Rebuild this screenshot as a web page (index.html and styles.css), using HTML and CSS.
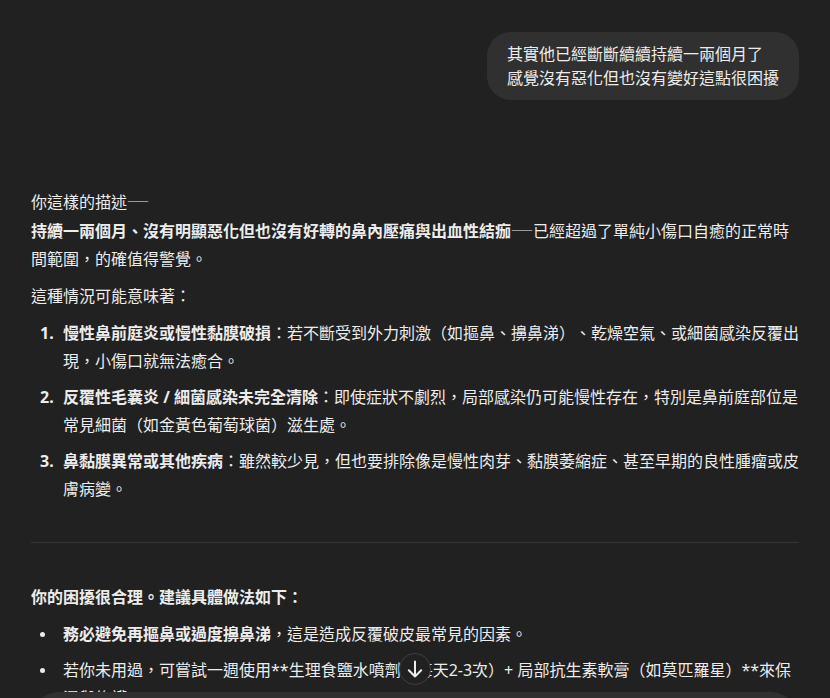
FILE: index.html
```html
<!DOCTYPE html>
<html lang="zh-Hant">
<head>
<meta charset="utf-8">
<title>Chat</title>
<link rel="stylesheet" href="styles.css">
</head>
<body>
<main class="thread">
  <section class="turn user">
    <div class="bubble">其實他已經斷斷續續持續一兩個月了<br>感覺沒有惡化但也沒有變好這點很困擾</div>
  </section>
  <section class="turn assistant">
    <p>你這樣的描述<span class="dash">——</span><br><strong>持續一兩個月、沒有明顯惡化但也沒有好轉的鼻內壓痛與出血性結痂</strong><span class="dash">——</span>已經超過了單純小傷口自癒的正常時間範圍，的確值得警覺。</p>
    <p>這種情況可能意味著：</p>
    <ol>
      <li><strong>慢性鼻前庭炎或慢性黏膜破損</strong>：若不斷受到外力刺激（如摳鼻、擤鼻涕）、乾燥空氣、或細菌感染反覆出現，小傷口就無法癒合。</li>
      <li><strong>反覆性毛囊炎 / 細菌感染未完全清除</strong>：即使症狀不劇烈，局部感染仍可能慢性存在，特別是鼻前庭部位是常見細菌（如金黃色葡萄球菌）滋生處。</li>
      <li><strong>鼻黏膜異常或其他疾病</strong>：雖然較少見，但也要排除像是慢性肉芽、黏膜萎縮症、甚至早期的良性腫瘤或皮膚病變。</li>
    </ol>
    <hr>
    <p><strong>你的困擾很合理。建議具體做法如下：</strong></p>
    <ul>
      <li><strong>務必避免再摳鼻或過度擤鼻涕</strong>，這是造成反覆破皮最常見的因素。</li>
      <li>若你未用過，可嘗試一週使用**生理食鹽水噴劑（每天2-3次）+ 局部抗生素軟膏（如莫匹羅星）**來保濕與修護。</li>
    </ul>
  </section>
</main>
<div class="composer"></div>
<button class="scroll-down" type="button" aria-label="Scroll down">
  <svg width="20" height="20" viewBox="0 0 20 20" fill="none" stroke="#ececec" stroke-width="2" stroke-linecap="round" stroke-linejoin="round"><path d="M10 2.5V17.5M3.8 11.3L10 17.5L16.2 11.3"/></svg>
</button>
</body>
</html>
```

FILE: styles.css
```css
html, body {
  margin: 0;
  height: 100%;
  overflow: hidden;
  background: #212121;
}

body {
  font-family: "Noto Sans", "Noto Sans CJK TC", sans-serif;
  color: #ececec;
  font-size: 16px;
  line-height: 28px;
  text-spacing-trim: space-all;
}

.thread {
  width: 768px;
  margin: 0 auto;
  padding-top: 32px;
}

.user {
  display: flex;
  justify-content: flex-end;
}

.bubble {
  background: #303030;
  border-radius: 24px;
  padding: 10px 20px;
  line-height: 24px;
}

.assistant {
  padding-top: 87px;
}

.assistant p {
  margin: 0 0 9px;
}

strong {
  font-weight: 700;
}

.dash {
  font-family: "Noto Sans CJK TC", sans-serif;
  font-size: 11px;
  font-weight: 700;
  vertical-align: 2px;
}

ol, ul {
  margin: 0 -3px 0 0;
  padding-left: 32px;
  list-style: none;
}

ol {
  counter-reset: item;
}

li {
  position: relative;
  margin-top: 8px;
}

ol li {
  counter-increment: item;
}

ol li::before {
  content: counter(item) ".";
  position: absolute;
  left: -23px;
  top: 0;
  font-weight: 700;
}

ul li::before {
  content: "";
  position: absolute;
  left: -23px;
  top: 12px;
  width: 5px;
  height: 5px;
  border-radius: 50%;
  background: #ececec;
}

hr {
  border: 0;
  border-top: 1px solid #363636;
  margin: 39px 0 40px;
}

.composer {
  position: fixed;
  left: calc(50% - 384px);
  width: 768px;
  top: 692px;
  height: 120px;
  border-radius: 28px;
  background: #303030;
}

.scroll-down {
  position: fixed;
  left: calc(50% - 16px);
  top: 653px;
  width: 32px;
  height: 32px;
  box-sizing: border-box;
  padding: 0;
  border: 1px solid #3f3f3f;
  border-radius: 50%;
  background: #212121;
  display: flex;
  align-items: center;
  justify-content: center;
}
```
